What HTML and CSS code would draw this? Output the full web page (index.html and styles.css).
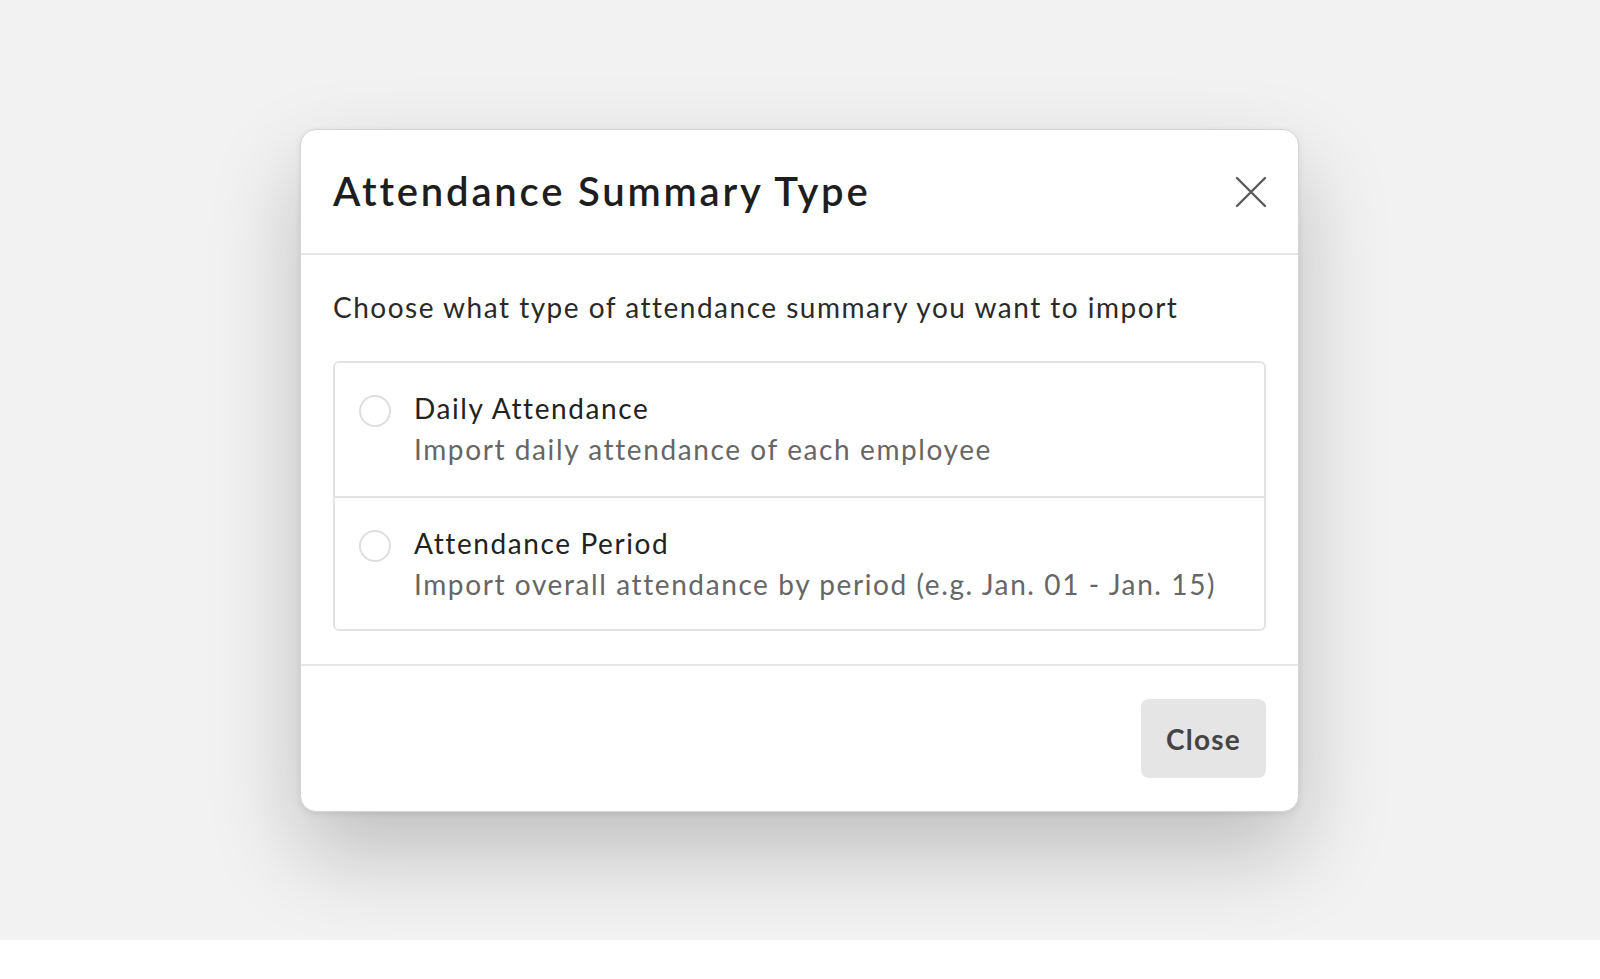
FILE: index.html
```html
<!DOCTYPE html>
<html lang="en">
<head>
<meta charset="utf-8">
<title>Attendance Summary Type</title>
<link rel="stylesheet" href="styles.css">
</head>
<body>
<div class="backdrop">
  <div class="modal">
    <div class="modal-header">
      <h1 class="modal-title">Attendance Summary Type</h1>
      <button class="icon-close" aria-label="Close">
        <svg width="32" height="32" viewBox="0 0 32 32"><path d="M2 2 L30 30 M30 2 L2 30" stroke="#5a5a5a" stroke-width="2.4" stroke-linecap="round" fill="none"/></svg>
      </button>
    </div>
    <div class="modal-body">
      <p class="intro">Choose what type of attendance summary you want to import</p>
      <div class="options">
        <label class="option">
          <span class="radio"></span>
          <span class="option-text">
            <span class="option-title">Daily Attendance</span>
            <span class="option-desc">Import daily attendance of each employee</span>
          </span>
        </label>
        <label class="option">
          <span class="radio"></span>
          <span class="option-text">
            <span class="option-title">Attendance Period</span>
            <span class="option-desc">Import overall attendance by period (e.g. Jan. 01 - Jan. 15)</span>
          </span>
        </label>
      </div>
    </div>
    <div class="modal-footer">
      <button class="btn-close">Close</button>
    </div>
  </div>
</div>
<div class="bottom-strip"></div>
</body>
</html>
```

FILE: styles.css
```css
* { box-sizing: border-box; }
html, body { margin: 0; padding: 0; }
body {
  width: 1600px;
  height: 979px;
  background: #ffffff;
  font-family: "Lato", "Noto Sans", sans-serif;
  overflow: hidden;
}
.backdrop {
  height: 940px;
  background: #f2f2f2;
  padding-top: 129px;
  display: flex;
  justify-content: center;
}
.modal {
  width: 999px;
  height: 683px;
  margin-left: -1px;
  background: #fff;
  border: 1px solid #d4d4d4;
  border-radius: 16px;
  box-shadow: 0 40px 90px rgba(0, 0, 0, 0.22), 0 2px 6px rgba(0,0,0,0.08);
  display: flex;
  flex-direction: column;
  position: relative;
  z-index: 1;
}
.modal-header {
  height: 125px;
  border-bottom: 2px solid #e6e6e6;
  display: flex;
  align-items: center;
  justify-content: space-between;
  padding: 0 31px 0 32px;
}
.modal-title {
  margin: 0;
  font-size: 40px;
  font-weight: 600;
  color: #1e1e1e;
  letter-spacing: 2.8px;
  position: relative;
  top: -1px;
}
.icon-close {
  border: 0;
  background: none;
  padding: 0;
  width: 32px;
  height: 32px;
  display: flex;
}
.modal-body {
  padding: 32px 32px 33px 32px;
  border-bottom: 2px solid #e6e6e6;
}
.intro {
  margin: 0 0 34px 0;
  font-size: 28px;
  color: #2a2a2a;
  line-height: 40px;
  letter-spacing: 1.5px;
}
.options {
  border: 2px solid #e3e3e3;
  border-radius: 6px;
}
.option {
  display: flex;
  align-items: flex-start;
  height: 133px;
  padding: 25px 24px 0 24px;
}
.option + .option {
  border-top: 2px solid #e3e3e3;
}
.radio {
  width: 32px;
  height: 32px;
  border: 2px solid #dedede;
  border-radius: 50%;
  margin-top: 7px;
  margin-right: 23px;
  flex: none;
}
.option-text {
  display: flex;
  flex-direction: column;
}
.option-title {
  font-size: 28px;
  line-height: 40px;
  color: #222;
  letter-spacing: 1.6px;
}
.option-desc {
  font-size: 28px;
  line-height: 43px;
  color: #666;
  letter-spacing: 1.6px;
}
.modal-footer {
  flex: 1;
  display: flex;
  justify-content: flex-end;
  align-items: flex-start;
  padding: 33px 32px 0 0;
}
.btn-close {
  width: 125px;
  height: 79px;
  border: 0;
  border-radius: 8px;
  background: #e5e5e5;
  color: #444;
  font-family: inherit;
  font-size: 28px;
  font-weight: 700;
  letter-spacing: 1.2px;
}
.bottom-strip {
  height: 39px;
  background: #fff;
}
```
